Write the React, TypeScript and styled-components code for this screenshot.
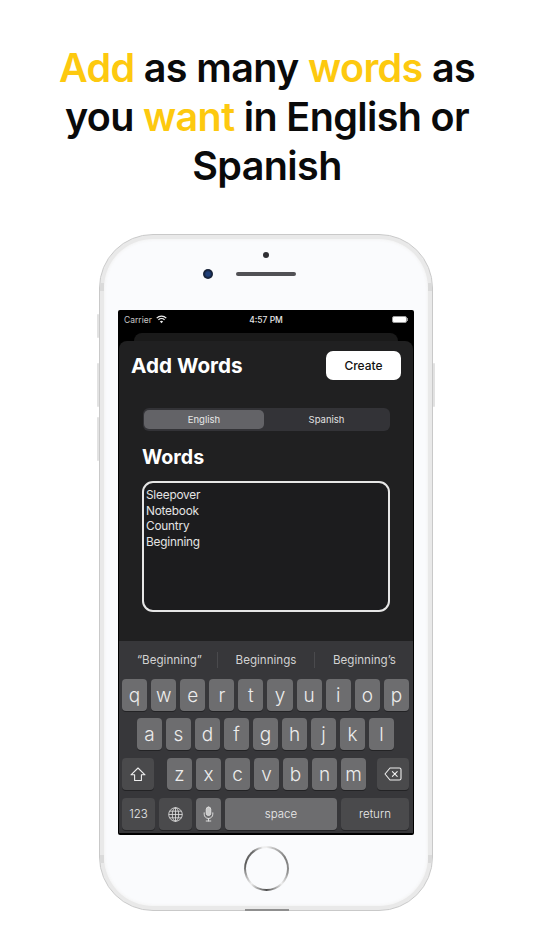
import styled, { createGlobalStyle } from "styled-components";

const GlobalStyle = createGlobalStyle`
  html, body {
    margin: 0;
    padding: 0;
    background: #fff;
  }
  body {
    font-family: "Inter", "Liberation Sans", sans-serif;
  }
`;

const Page = styled.div`
  width: 534px;
  height: 950px;
  overflow: hidden;
  background: #fff;
`;

const Headline = styled.h1`
  margin: 0;
  padding: 44px 40px 0;
  height: 190px;
  box-sizing: border-box;
  font-size: 39.5px;
  line-height: 49px;
  font-weight: 600;
  letter-spacing: -0.63px;
  text-align: center;
  color: #0a0a0a;
`;

const Accent = styled.span`
  color: #fdc90f;
`;

const Phone = styled.div`
  position: relative;
  box-sizing: border-box;
  width: 334px;
  height: 677px;
  margin: 44px 0 0 99px;
  border: 1px solid #c9c9c9;
  border-radius: 54px;
  background: #fafbfd;
  box-shadow: inset 0 0 0 4px #e9e9e9, inset 0 0 3px 5px #f3f3f3;
  display: flex;
  flex-direction: column;
  align-items: center;
`;

const SideButton = styled.span<{ $side: "left" | "right"; $top: number; $h: number }>`
  position: absolute;
  top: ${(p) => p.$top}px;
  height: ${(p) => p.$h}px;
  width: 2px;
  ${(p) => p.$side}: -3px;
  background: #e2e2e2;
  border-radius: 1px;
`;

const Band = styled.span<{ $side: "left" | "right"; $top: number }>`
  position: absolute;
  top: ${(p) => p.$top}px;
  ${(p) => p.$side}: 0;
  width: 4px;
  height: 8px;
  background: #dadada;
`;

const BottomPort = styled.span`
  position: absolute;
  left: 145px;
  bottom: -1px;
  width: 44px;
  height: 2px;
  background: #8f8f8f;
`;

const FrontDot = styled.div`
  width: 6px;
  height: 6px;
  margin-top: 17px;
  border-radius: 50%;
  background: #2f2f33;
`;

const SensorRow = styled.div`
  display: grid;
  grid-template-columns: 1fr 60px 1fr;
  align-items: center;
  width: 100%;
  height: 10px;
  margin-top: 11px;
`;

const Camera = styled.div`
  justify-self: end;
  width: 10px;
  height: 10px;
  margin-right: 23px;
  border-radius: 50%;
  background: radial-gradient(circle at 50% 50%, #1f3f78 0 28%, #14223c 55%, #25252a 100%);
`;

const Speaker = styled.div`
  height: 4px;
  border-radius: 2px;
  background: #515155;
`;

const Screen = styled.div`
  box-sizing: border-box;
  width: 296px;
  height: 525px;
  margin-top: 31px;
  background: #000;
  display: flex;
  flex-direction: column;
  align-items: center;
  border-radius: 2px;
`;

const StatusBar = styled.div`
  box-sizing: border-box;
  display: grid;
  grid-template-columns: 1fr auto 1fr;
  align-items: center;
  width: 100%;
  height: 23px;
  padding: 0 6px 4px;
  font-size: 8.5px;
  color: #e6e6e6;
`;

const Carrier = styled.div`
  display: flex;
  align-items: center;
  gap: 4px;
  color: #c8c8c8;
`;

const Clock = styled.div`
  font-weight: 500;
`;

const BatteryBox = styled.div`
  justify-self: end;
  display: flex;
  align-items: center;
`;

const Battery = styled.div`
  box-sizing: border-box;
  width: 15px;
  height: 7px;
  border: 1px solid #9a9a9a;
  border-radius: 2px;
  background: #fff;
`;

const BatteryTip = styled.div`
  width: 1px;
  height: 3px;
  background: #8d8d8d;
`;

const BackSheet = styled.div`
  width: 264px;
  height: 8px;
  flex: none;
  border-radius: 8px 8px 0 0;
  background: #1a1a1a;
`;

const Sheet = styled.div`
  box-sizing: border-box;
  width: 294px;
  height: 300px;
  flex: none;
  padding: 10px 12px 0 12px;
  border-radius: 8px 8px 0 0;
  background: #202021;
`;

const SheetHeader = styled.div`
  display: flex;
  align-items: center;
  justify-content: space-between;
`;

const SheetTitle = styled.div`
  padding-top: 1px;
  font-size: 20.7px;
  line-height: 28px;
  font-weight: 700;
  color: #fff;
`;

const CreateButton = styled.div`
  display: flex;
  align-items: center;
  justify-content: center;
  width: 75px;
  height: 29px;
  border-radius: 7px;
  background: #fff;
  font-size: 12px;
  font-weight: 500;
  color: #111;
`;

const Form = styled.div`
  box-sizing: border-box;
  padding: 28px 11px 0 12px;
`;

const Segments = styled.div`
  box-sizing: border-box;
  display: grid;
  grid-template-columns: 120px 1fr;
  height: 23px;
  padding: 2px 1px;
  border-radius: 6px;
  background: #333337;
`;

const Segment = styled.div<{ $active?: boolean }>`
  display: flex;
  align-items: center;
  justify-content: center;
  border-radius: 5px;
  font-size: 9.5px;
  color: ${(p) => (p.$active ? "#e8e8e8" : "#e2e2e2")};
  background: ${(p) => (p.$active ? "#636367" : "transparent")};
`;

const FormLabel = styled.div`
  margin: 14px 0 0 -1px;
  font-size: 19.6px;
  line-height: 24px;
  font-weight: 700;
  color: #fff;
`;

const WordsBox = styled.div`
  box-sizing: border-box;
  height: 131px;
  margin: 12px 0 0 -1px;
  padding: 5px 2px;
  border: 2px solid #e6e6e6;
  border-radius: 11px;
  background: #1c1c1e;
  font-size: 11.8px;
  letter-spacing: -0.2px;
  line-height: 15.6px;
  color: #e4e4e4;
`;

const Keyboard = styled.div`
  box-sizing: border-box;
  width: 294px;
  height: 192px;
  flex: none;
  padding: 0 4px 0 3px;
  background: #37373a;
`;

const Suggestions = styled.div`
  display: grid;
  grid-template-columns: 95px 97px 100px;
  align-items: center;
  height: 38px;
`;

const Suggestion = styled.div<{ $divider?: boolean }>`
  height: 16px;
  line-height: 16px;
  text-align: center;
  font-size: 11.6px;
  color: #d2d2d2;
  border-left: ${(p) => (p.$divider ? "1px solid #4a4a4d" : "none")};
`;

const KeyRow = styled.div<{ $inset?: number; $top: number }>`
  display: flex;
  gap: 4px;
  margin-top: ${(p) => p.$top}px;
  padding: 0 ${(p) => p.$inset ?? 0}px;
`;

const Key = styled.div<{ $w?: number; $dark?: boolean; $small?: boolean; $after?: number; $before?: number }>`
  display: flex;
  align-items: center;
  justify-content: center;
  flex: ${(p) => (p.$w ? `0 0 ${p.$w}px` : "1 1 0")};
  height: 32px;
  margin-left: ${(p) => p.$before ?? 0}px;
  margin-right: ${(p) => p.$after ?? 0}px;
  border-radius: 4px;
  background: ${(p) => (p.$dark ? "#4a4a4c" : "#6d6d6f")};
  box-shadow: 0 1px 0 #232325;
  font-size: ${(p) => (p.$small ? "11.5px" : "19px")};
  font-weight: 300;
  color: #ececec;
`;

const Home = styled.div`
  box-sizing: border-box;
  width: 45px;
  height: 45px;
  margin-top: 11px;
  border-radius: 50%;
  padding: 2px;
  background: conic-gradient(#efefef 0deg, #bdbdbd 20deg, #7d7d7d 60deg, #8f8f8f 100deg, #ededed 135deg, #4f4f4f 180deg, #ededed 225deg, #5b5b5b 280deg, #6a6a6a 320deg, #efefef 350deg);
`;

const HomeInner = styled.div`
  width: 100%;
  height: 100%;
  border-radius: 50%;
  background: #fafbfd;
`;

const Wifi = () => (
  <svg width="11" height="9" viewBox="0 0 11 9" fill="none" stroke="#f0f0f0" strokeWidth="1.3">
    <path d="M.7 3.1a7 7 0 0 1 9.6 0" />
    <path d="M2.4 4.9a4.5 4.5 0 0 1 6.2 0" />
    <path d="M5.5 8.3 3.9 6.6a2.3 2.3 0 0 1 3.2 0z" fill="#f0f0f0" stroke="none" />
  </svg>
);

const ShiftIcon = () => (
  <svg width="16" height="15" viewBox="0 0 16 15" fill="none" stroke="#eee" strokeWidth="1.1" strokeLinejoin="round">
    <path d="M8 1 1 7.8h3.6v5.7h6.8V7.8H15z" />
  </svg>
);

const BackspaceIcon = () => (
  <svg width="18" height="14" viewBox="0 0 18 14" fill="none" stroke="#eee" strokeWidth="1.1" strokeLinejoin="round" strokeLinecap="round">
    <path d="M6 1h9.4A1.6 1.6 0 0 1 17 2.6v8.8a1.6 1.6 0 0 1-1.6 1.6H6L1 7z" />
    <path d="m8.4 4.6 4.8 4.8M13.2 4.6l-4.8 4.8" />
  </svg>
);

const GlobeIcon = () => (
  <svg width="15" height="15" viewBox="0 0 15 15" fill="none" stroke="#e4e4e4" strokeWidth="0.8">
    <circle cx="7.5" cy="7.5" r="6.8" />
    <ellipse cx="7.5" cy="7.5" rx="3.2" ry="6.8" />
    <path d="M7.5.7v13.6M.7 7.5h13.6M1.6 4.2h11.8M1.6 10.8h11.8" />
  </svg>
);

const MicIcon = () => (
  <svg width="11" height="16" viewBox="0 0 11 16" fill="none" stroke="#dcdcdc" strokeWidth="1" strokeLinecap="round">
    <rect x="3.25" y="1" width="4.5" height="8.5" rx="2.25" fill="#c9c9c9" />
    <path d="M1.2 6.8v1.4a4.3 4.3 0 0 0 8.6 0V6.8M5.5 12.5v2.5M3.2 15h4.6" />
  </svg>
);

const ROW_ONE = ["q", "w", "e", "r", "t", "y", "u", "i", "o", "p"];
const ROW_TWO = ["a", "s", "d", "f", "g", "h", "j", "k", "l"];
const ROW_THREE = ["z", "x", "c", "v", "b", "n", "m"];

export default function App() {
  return (
    <Page>
      <GlobalStyle />
      <Headline>
        <Accent>Add</Accent> as many <Accent>words</Accent> as you <Accent>want</Accent> in English or Spanish
      </Headline>
      <Phone>
        <SideButton $side="left" $top={79} $h={24} />
        <SideButton $side="left" $top={128} $h={44} />
        <SideButton $side="left" $top={182} $h={44} />
        <SideButton $side="right" $top={128} $h={44} />
        <Band $side="left" $top={48} />
        <Band $side="right" $top={48} />
        <Band $side="left" $top={620} />
        <Band $side="right" $top={620} />
        <BottomPort />
        <FrontDot />
        <SensorRow>
          <Camera />
          <Speaker />
        </SensorRow>
        <Screen>
          <StatusBar>
            <Carrier>
              Carrier <Wifi />
            </Carrier>
            <Clock>4:57 PM</Clock>
            <BatteryBox>
              <Battery />
              <BatteryTip />
            </BatteryBox>
          </StatusBar>
          <BackSheet />
          <Sheet>
            <SheetHeader>
              <SheetTitle>Add Words</SheetTitle>
              <CreateButton>Create</CreateButton>
            </SheetHeader>
            <Form>
              <Segments>
                <Segment $active>English</Segment>
                <Segment>Spanish</Segment>
              </Segments>
              <FormLabel>Words</FormLabel>
              <WordsBox>
                Sleepover
                <br />
                Notebook
                <br />
                Country
                <br />
                Beginning
              </WordsBox>
            </Form>
          </Sheet>
          <Keyboard>
            <Suggestions>
              <Suggestion>“Beginning”</Suggestion>
              <Suggestion $divider>Beginnings</Suggestion>
              <Suggestion $divider>Beginning’s</Suggestion>
            </Suggestions>
            <KeyRow $top={0}>
              {ROW_ONE.map((k) => (
                <Key key={k}>{k}</Key>
              ))}
            </KeyRow>
            <KeyRow $top={7} $inset={15}>
              {ROW_TWO.map((k) => (
                <Key key={k}>{k}</Key>
              ))}
            </KeyRow>
            <KeyRow $top={8}>
              <Key $w={32} $dark $after={9}>
                <ShiftIcon />
              </Key>
              {ROW_THREE.map((k) => (
                <Key key={k}>{k}</Key>
              ))}
              <Key $w={32} $dark $before={7}>
                <BackspaceIcon />
              </Key>
            </KeyRow>
            <KeyRow $top={8}>
              <Key $w={33} $dark $small>
                123
              </Key>
              <Key $w={33} $dark>
                <GlobeIcon />
              </Key>
              <Key $w={25}>
                <MicIcon />
              </Key>
              <Key $small>space</Key>
              <Key $w={68} $dark $small>
                return
              </Key>
            </KeyRow>
          </Keyboard>
        </Screen>
        <Home>
          <HomeInner />
        </Home>
      </Phone>
    </Page>
  );
}
